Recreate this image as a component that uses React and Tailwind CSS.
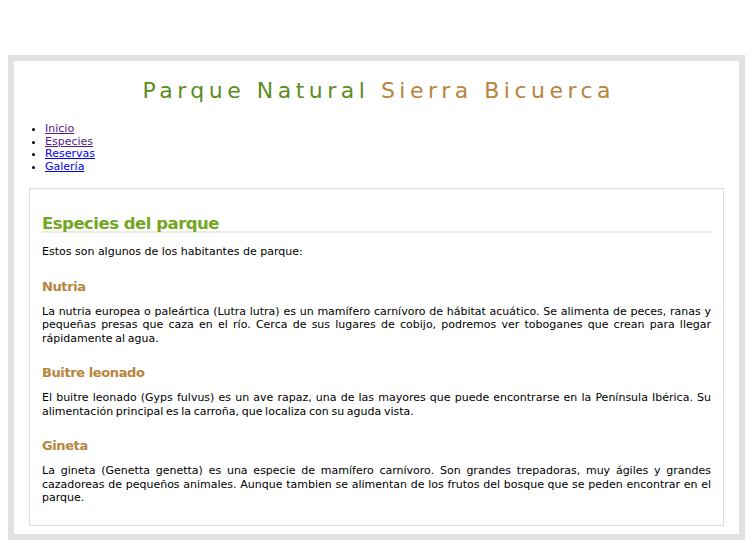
import React from 'react';

const links = [
  { label: 'Inicio', visited: true },
  { label: 'Especies', visited: true },
  { label: 'Reservas', visited: false },
  { label: 'Galería', visited: false },
];

const species = [
  {
    name: 'Nutria',
    text: 'La nutria europea o paleártica (Lutra lutra) es un mamífero carnívoro de hábitat acuático. Se alimenta de peces, ranas y pequeñas presas que caza en el río. Cerca de sus lugares de cobijo, podremos ver toboganes que crean para llegar rápidamente al agua.',
  },
  {
    name: 'Buitre leonado',
    text: 'El buitre leonado (Gyps fulvus) es un ave rapaz, una de las mayores que puede encontrarse en la Península Ibérica. Su alimentación principal es la carroña, que localiza con su aguda vista.',
  },
  {
    name: 'Gineta',
    text: 'La gineta (Genetta genetta) es una especie de mamífero carnívoro. Son grandes trepadoras, muy ágiles y grandes cazadoreas de pequeños animales. Aunque tambien se alimentan de los frutos del bosque que se peden encontrar en el parque.',
  },
];

const App = () => {
  return (
    <div className="min-h-[556px] bg-white px-2 pt-[55px] font-['DejaVu_Sans',sans-serif] text-black">
      <div className="border-[6px] border-[#e1e1e1] px-[15px] pb-[8px]">
        {/* Cabecera */}
        <h1 className="pt-[19px] pl-[4.5px] text-center text-[22px] leading-[22px] tracking-[4.5px]">
          <span className="text-[#5b8c1c]">Parque Natural</span>{' '}
          <span className="text-[#b8843c]">Sierra Bicuerca</span>
        </h1>

        {/* Menú */}
        <ul className="mt-[21px] list-outside list-disc pl-4 text-[11px] leading-[12.5px]">
          {links.map((l) => (
            <li key={l.label}>
              <a href="#" className={`underline ${l.visited ? 'text-[#551a8b]' : 'text-[#0000ee]'}`}>
                {l.label}
              </a>
            </li>
          ))}
        </ul>

        {/* Contenido */}
        <div className="mt-[15px] border border-[#dcdcdc] px-3 pt-[28px] pb-5 text-[11px] leading-[13.5px]">
          <h2 className="border-b-2 border-[#ececdf] text-[16.5px] font-bold leading-[14px] tracking-[-0.5px] text-[#72a61e]">
            Especies del parque
          </h2>
          <p className="mt-3">Estos son algunos de los habitantes de parque:</p>

          {species.map((s) => (
            <div key={s.name}>
              <h3 className="mt-5 mb-2.5 text-[13px] font-bold leading-4 tracking-[-0.4px] text-[#b8843c]">{s.name}</h3>
              <p className="text-justify [word-spacing:-0.8px]">{s.text}</p>
            </div>
          ))}
        </div>
      </div>
    </div>
  );
};

export default App;
